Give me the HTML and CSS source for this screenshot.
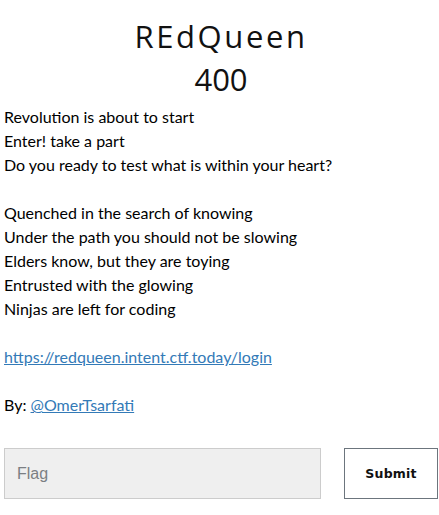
FILE: index.html
```html
<!DOCTYPE html>
<html>
<head>
<meta charset="utf-8">
<link rel="stylesheet" href="styles.css">
</head>
<body>
<div class="challenge">
  <h3 class="name">REdQueen</h3>
  <h4 class="value">400</h4>
  <div class="description">
    <p>Revolution is about to start<br>Enter! take a part<br>Do you ready to test what is within your heart?</p>
    <p>Quenched in the search of knowing<br>Under the path you should not be slowing<br>Elders know, but they are toying<br>Entrusted with the glowing<br>Ninjas are left for coding</p>
    <p><a href="#">https://redqueen.intent.ctf.today/login</a></p>
    <p class="last">By: <a href="#">@OmerTsarfati</a></p>
  </div>
  <form class="submit-row">
    <input class="flag" type="text" placeholder="Flag">
    <button class="submit" type="button">Submit</button>
  </form>
</div>
</body>
</html>
```

FILE: styles.css
```css
html, body {
  margin: 0;
  padding: 0;
  background: #fff;
}
.challenge {
  padding: 0 1px 0 4px;
  font-family: Lato, "Open Sans", sans-serif;
  color: #212529;
}
.name {
  margin: 16px 0 0;
  text-align: center;
  font-family: "Open Sans", sans-serif;
  font-weight: 400;
  font-size: 31px;
  letter-spacing: 2.6px;
  line-height: 40px;
  color: #111;
}
.value {
  margin: 3px 0 6px;
  text-align: center;
  font-family: "Open Sans", sans-serif;
  font-weight: 400;
  font-size: 31px;
  line-height: 40px;
  color: #111;
}
.description p {
  margin: 0 0 24px;
  font-size: 16px;
  line-height: 24px;
  color: #000;
}
.description p.last {
  margin-bottom: 0;
}
.description a {
  color: #337ab7;
  text-decoration: underline;
}
.submit-row {
  display: flex;
  gap: 23px;
  margin-top: 31px;
}
.flag {
  flex: 1;
  height: 51px;
  box-sizing: border-box;
  border: 1px solid #ccc;
  background: #efefef;
  padding: 0 12px;
  font-family: "Liberation Sans", Arial, sans-serif;
  font-size: 16px;
  color: #333;
}
.flag::placeholder {
  color: #7b7f83;
}
.submit {
  width: 94px;
  height: 51px;
  box-sizing: border-box;
  border: 1px solid #6c757d;
  background: #fff;
  font-family: "DejaVu Sans", sans-serif;
  font-weight: 700;
  font-size: 12.5px;
  letter-spacing: 0.2px;
  color: #111;
}
```
